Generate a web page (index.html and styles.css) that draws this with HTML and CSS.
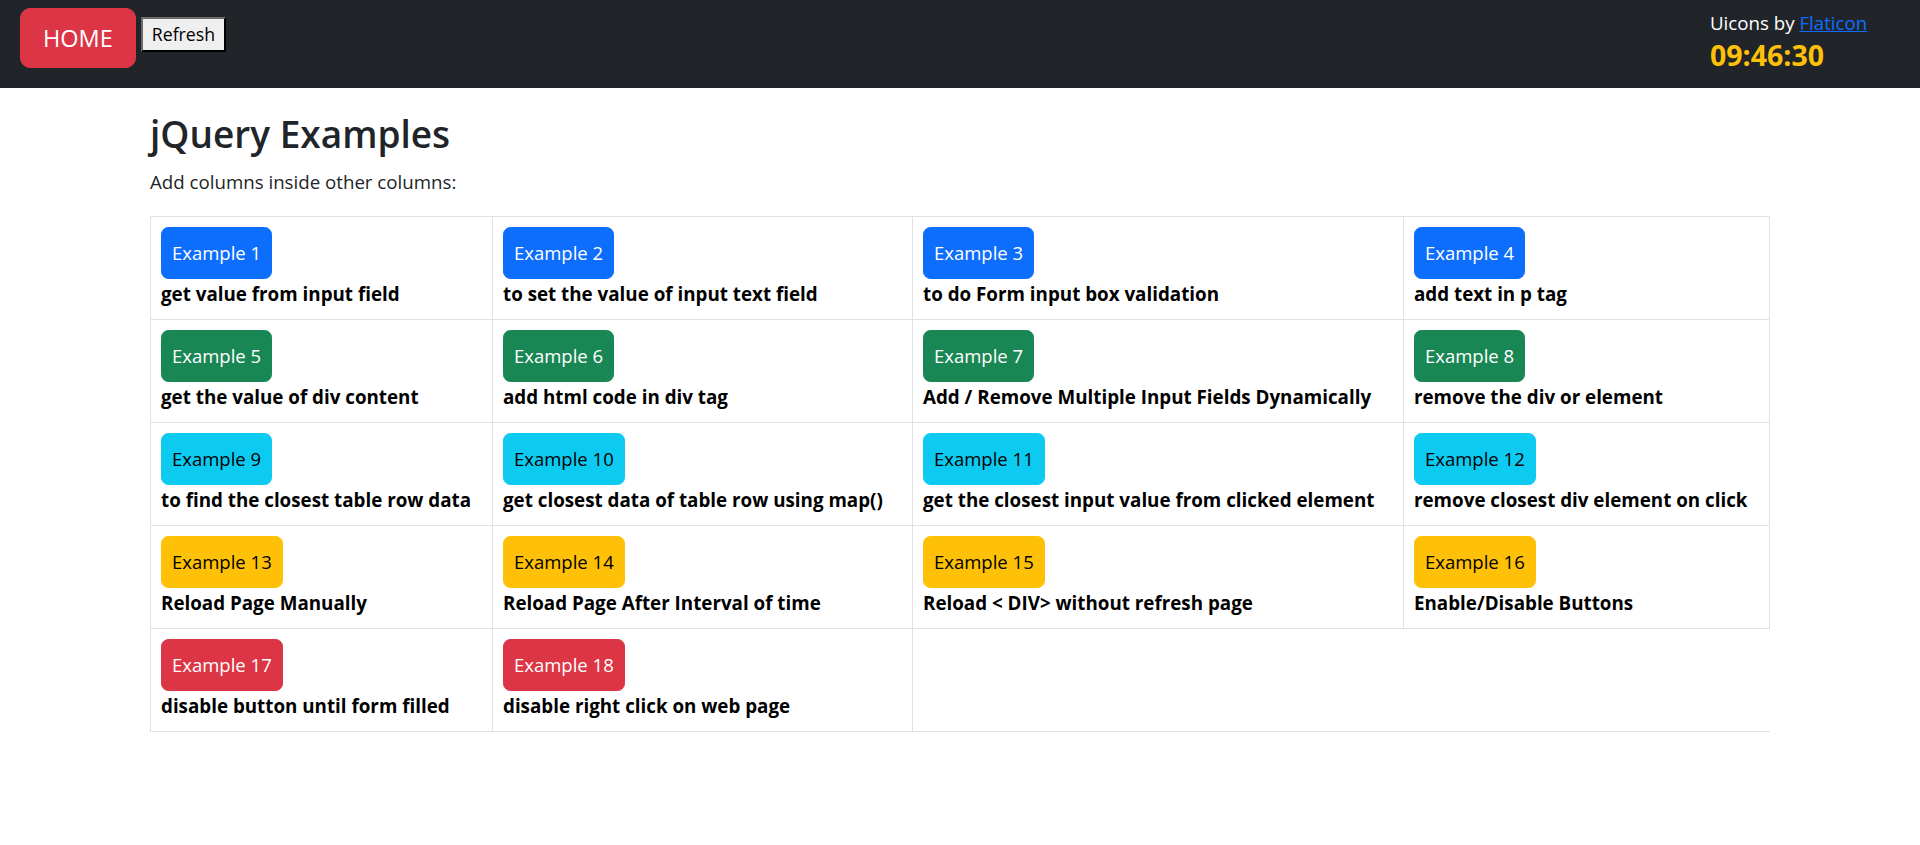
FILE: index.html
```html
<!DOCTYPE html>
<html lang="en">
<head>
<meta charset="utf-8">
<title>jQuery Examples</title>
<link rel="stylesheet" href="styles.css">
</head>
<body>
<header class="topbar">
  <div class="topbar-left">
    <a class="btn-home" href="#">HOME</a>
    <button class="btn-refresh" type="button">Refresh</button>
  </div>
  <div class="topbar-right">
    <div class="credit">Uicons by <a href="#">Flaticon</a></div>
    <div class="clock">09:46:30</div>
  </div>
</header>

<main class="content">
  <h2 class="page-title">jQuery Examples</h2>
  <p class="lead-text">Add columns inside other columns:</p>

  <table class="examples">
    <colgroup>
      <col class="c1"><col class="c2"><col class="c3"><col class="c4">
    </colgroup>
    <tbody>
      <tr>
        <td><div class="cell"><a class="ex-btn primary" href="#">Example 1</a><b class="desc">get value from input field</b></div></td>
        <td><div class="cell"><a class="ex-btn primary" href="#">Example 2</a><b class="desc">to set the value of input text field</b></div></td>
        <td><div class="cell"><a class="ex-btn primary" href="#">Example 3</a><b class="desc">to do Form input box validation</b></div></td>
        <td><div class="cell"><a class="ex-btn primary" href="#">Example 4</a><b class="desc">add text in p tag</b></div></td>
      </tr>
      <tr>
        <td><div class="cell"><a class="ex-btn success" href="#">Example 5</a><b class="desc">get the value of div content</b></div></td>
        <td><div class="cell"><a class="ex-btn success" href="#">Example 6</a><b class="desc">add html code in div tag</b></div></td>
        <td><div class="cell"><a class="ex-btn success" href="#">Example 7</a><b class="desc">Add / Remove Multiple Input Fields Dynamically</b></div></td>
        <td><div class="cell"><a class="ex-btn success" href="#">Example 8</a><b class="desc">remove the div or element</b></div></td>
      </tr>
      <tr>
        <td><div class="cell"><a class="ex-btn info" href="#">Example 9</a><b class="desc">to find the closest table row data</b></div></td>
        <td><div class="cell"><a class="ex-btn info" href="#">Example 10</a><b class="desc">get closest data of table row using map()</b></div></td>
        <td><div class="cell"><a class="ex-btn info" href="#">Example 11</a><b class="desc">get the closest input value from clicked element</b></div></td>
        <td><div class="cell"><a class="ex-btn info" href="#">Example 12</a><b class="desc">remove closest div element on click</b></div></td>
      </tr>
      <tr>
        <td><div class="cell"><a class="ex-btn warning" href="#">Example 13</a><b class="desc">Reload Page Manually</b></div></td>
        <td><div class="cell"><a class="ex-btn warning" href="#">Example 14</a><b class="desc">Reload Page After Interval of time</b></div></td>
        <td><div class="cell"><a class="ex-btn warning" href="#">Example 15</a><b class="desc">Reload &lt; DIV&gt; without refresh page</b></div></td>
        <td><div class="cell"><a class="ex-btn warning" href="#">Example 16</a><b class="desc">Enable/Disable Buttons</b></div></td>
      </tr>
      <tr>
        <td><div class="cell"><a class="ex-btn danger" href="#">Example 17</a><b class="desc">disable button until form filled</b></div></td>
        <td><div class="cell"><a class="ex-btn danger" href="#">Example 18</a><b class="desc">disable right click on web page</b></div></td>
      </tr>
    </tbody>
  </table>
</main>
</body>
</html>
```

FILE: styles.css
```css
* { box-sizing: border-box; }

body {
  margin: 0;
  font-family: "Open Sans", "Noto Sans", sans-serif;
  font-size: 18.7px;
  line-height: 1.5;
  color: #212529;
  background: #fff;
}

/* ---------- top bar ---------- */
.topbar {
  background: #212529;
  height: 88px;
  display: flex;
  justify-content: space-between;
  align-items: flex-start;
  padding: 8px 0 0 20px;
}

.topbar-left {
  display: flex;
  align-items: flex-start;
  gap: 5px;
}

.btn-home {
  display: inline-block;
  background: #dc3545;
  color: #fff;
  text-decoration: none;
  font-size: 23.5px;
  line-height: 38px;
  padding: 10px 22px;
  border: 1px solid #dc3545;
  border-radius: 10px;
  height: 60px;
}

.btn-refresh {
  margin-top: 9px;
  font-family: "Open Sans", "Noto Sans", sans-serif;
  font-size: 17.7px;
  line-height: 25px;
  height: 35px;
  padding: 3px 9px;
  background: #efefef;
  color: #000;
  border-width: 2px;
  border-style: solid;
  border-color: #6b6b6b #000 #000 #6b6b6b;
}

.topbar-right {
  width: 160px;
  margin-right: 50px;
  padding-top: 1px;
}

.credit {
  color: #fff;
  font-size: 18.7px;
  line-height: 28px;
}

.credit a { color: #0d6efd; }

.clock {
  color: #ffc107;
  font-weight: 700;
  font-size: 28.5px;
  line-height: 36px;
}

/* ---------- content ---------- */
.content {
  padding: 0 150px;
}

.page-title {
  margin: 22px 0 10px;
  font-size: 37px;
  font-weight: 600;
  line-height: 47px;
  color: #212529;
}

.lead-text {
  margin: 0 0 19px;
  line-height: 30px;
}

.examples {
  width: 1619px;
  table-layout: fixed;
  border-collapse: collapse;
}

.examples .c1 { width: 342px; }
.examples .c2 { width: 420px; }
.examples .c3 { width: 491px; }
.examples .c4 { width: 366px; }

.examples tr {
  border-top: 1px solid #dee2e6;
  border-bottom: 1px solid #dee2e6;
}

.examples td {
  border-left: 1px solid #dee2e6;
  border-right: 1px solid #dee2e6;
  padding: 10px;
  vertical-align: top;
}

.cell {
  display: flex;
  flex-direction: column;
  align-items: flex-start;
}

.ex-btn {
  display: inline-block;
  font-size: 18.5px;
  line-height: 30px;
  padding: 10px;
  border: 1px solid transparent;
  border-radius: 7.5px;
  text-decoration: none;
  white-space: nowrap;
}

.ex-btn.primary { background: #0d6efd; border-color: #0d6efd; color: #fff; }
.ex-btn.success { background: #198754; border-color: #198754; color: #fff; }
.ex-btn.info    { background: #0dcaf0; border-color: #0dcaf0; color: #000; }
.ex-btn.warning { background: #ffc107; border-color: #ffc107; color: #000; }
.ex-btn.danger  { background: #dc3545; border-color: #dc3545; color: #fff; }

.desc {
  font-weight: 700;
  font-size: 18.8px;
  line-height: 30px;
  color: #000;
  white-space: nowrap;
}
```
